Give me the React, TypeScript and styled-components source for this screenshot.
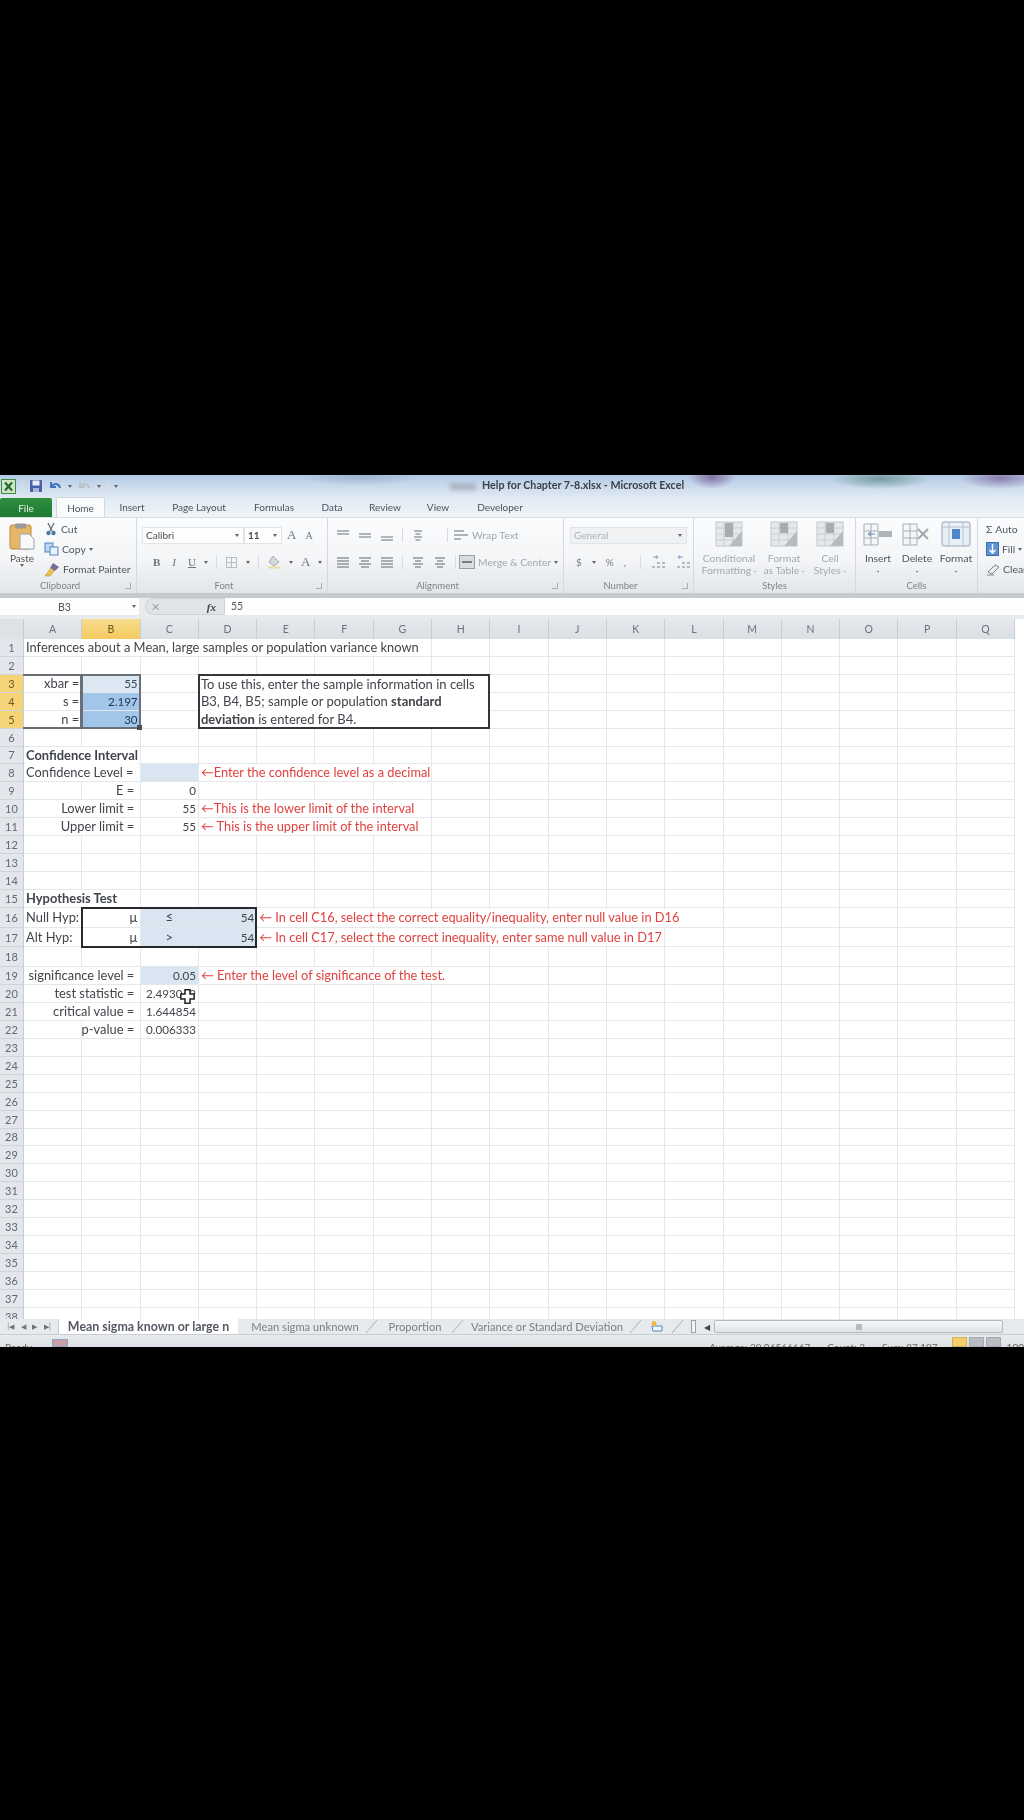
import React from "react";
import styled, { createGlobalStyle } from "styled-components";

const ROW_H = 17.93;
const TALL_ROW_H = 19.8;
const COL_W = 58.3;
const HEAD_W = 24;
const HEAD_H = 20;
const COLS = "ABCDEFGHIJKLMNOPQ".split("");

// rows 16-18 were made a little taller in the sheet
const rowHeight = (r: number) => (r >= 16 && r <= 18 ? TALL_ROW_H : ROW_H);
const rowTop = (r: number) => {
  let top = HEAD_H;
  for (let i = 1; i < r; i++) top += rowHeight(i);
  return top;
};

type Cell = {
  text: React.ReactNode;
  align?: "left" | "right" | "center";
  color?: string;
  bold?: boolean;
  fill?: string;
  num?: boolean;
};

const RED = "#e0413f";
const PALE = "#d9e5f1";
const SEL = "#a2c6ea";

const cells: Record<string, Cell> = {
  A1: { text: "Inferences about a Mean, large samples or population variance known" },
  A3: { text: "xbar =", align: "right" },
  A4: { text: "s =", align: "right" },
  A5: { text: "n =", align: "right" },
  B3: { text: "55", align: "right", fill: "#dbe7f2", color: "#3c4a5a", num: true },
  B4: { text: "2.197", align: "right", fill: SEL, color: "#1d3350", num: true },
  B5: { text: "30", align: "right", fill: SEL, color: "#1d3350", num: true },
  A7: { text: "Confidence Interval", bold: true },
  A8: { text: "Confidence Level =" },
  C8: { text: "", fill: PALE },
  D8: { text: "←Enter the confidence level as a decimal", color: RED },
  B9: { text: "E =\u00a0", align: "right" },
  C9: { text: "0", align: "right", num: true },
  B10: { text: "Lower limit =\u00a0", align: "right" },
  C10: { text: "55", align: "right", num: true },
  D10: { text: "←This is the lower limit of the interval", color: RED },
  B11: { text: "Upper limit =\u00a0", align: "right" },
  C11: { text: "55", align: "right", num: true },
  D11: { text: "← This is the upper limit of the interval", color: RED },
  A15: { text: "Hypothesis Test", bold: true },
  A16: { text: "Null Hyp:" },
  B16: { text: "µ", align: "right" },
  C16: { text: "≤", align: "center", fill: PALE },
  D16: { text: "54", align: "right", fill: PALE, num: true },
  E16: { text: "← In cell C16, select the correct equality/inequality, enter null value in D16", color: RED },
  A17: { text: "Alt Hyp:" },
  B17: { text: "µ", align: "right" },
  C17: { text: ">", align: "center", fill: PALE },
  D17: { text: "54", align: "right", fill: PALE, num: true },
  E17: { text: "← In cell C17, select the correct inequality, enter same null value in D17", color: RED },
  B19: { text: "significance level =\u00a0", align: "right" },
  C19: { text: "0.05", align: "right", fill: PALE, num: true },
  D19: { text: "← Enter the level of significance of the test.", color: RED },
  B20: { text: "test statistic =\u00a0", align: "right" },
  C20: { text: "2.493049", align: "right", num: true },
  B21: { text: "critical value =\u00a0", align: "right" },
  C21: { text: "1.644854", align: "right", num: true },
  B22: { text: "p-value =\u00a0", align: "right" },
  C22: { text: "0.006333", align: "right", num: true },
};

const rows = Array.from({ length: 38 }, (_, i) => i + 1);

const GlobalStyle = createGlobalStyle`
  html, body {
    margin: 0;
    padding: 0;
    background: #000;
  }
`;

const Page = styled.div`
  width: 1024px;
  height: 1820px;
  padding-top: 475px;
  box-sizing: border-box;
  background: #000;
  overflow: hidden;
`;

const ExcelWindow = styled.div`
  height: 872px;
  display: flex;
  flex-direction: column;
  overflow: hidden;
  background: #fff;
  font-family: "Lato", "Open Sans", sans-serif;
  color: #3b3f45;
  filter: blur(0.7px);
`;

const TitleBar = styled.div`
  position: relative;
  height: 22px;
  flex-shrink: 0;
  display: flex;
  align-items: center;
  gap: 6px;
  padding-left: 1px;
  box-sizing: border-box;
  background:
    radial-gradient(ellipse 24px 12px at 712px 2px, rgba(110, 80, 140, 0.75), transparent),
    radial-gradient(ellipse 50px 10px at 880px 4px, rgba(80, 130, 120, 0.65), transparent),
    radial-gradient(ellipse 40px 11px at 1000px 3px, rgba(120, 90, 150, 0.7), transparent),
    radial-gradient(ellipse 60px 9px at 360px 2px, rgba(120, 140, 180, 0.4), transparent),
    linear-gradient(#b4cbe4, #dfe9f4);
`;

const TitleText = styled.div`
  position: absolute;
  left: 482px;
  top: 3px;
  font-size: 10.7px;
  font-weight: 700;
  color: #3c4048;
  white-space: nowrap;
`;

const TitleSmudge = styled.div`
  position: absolute;
  left: 450px;
  top: 8px;
  width: 26px;
  height: 7px;
  background: #a9b4c4;
  filter: blur(2px);
`;

const TabRow = styled.div`
  height: 20px;
  flex-shrink: 0;
  display: flex;
  align-items: stretch;
  background: linear-gradient(#e0e9f3, #f0f4f8);
  font-size: 10px;
  color: #4c5460;
`;

const FileTab = styled.div`
  width: 52px;
  margin-top: 1px;
  display: flex;
  align-items: center;
  justify-content: center;
  color: #e6f3e6;
  background: linear-gradient(#2f8f3e, #1c7a31);
  border-radius: 2px 2px 0 0;
`;

const HomeTab = styled.div`
  width: 49px;
  margin-left: 4px;
  display: flex;
  align-items: center;
  justify-content: center;
  background: #fafbfc;
  border: 1px solid #d2d6db;
  border-bottom: none;
  border-radius: 2px 2px 0 0;
  box-sizing: border-box;
`;

const RibbonTab = styled.div<{ $w: number }>`
  width: ${(p) => p.$w}px;
  display: flex;
  align-items: center;
  justify-content: center;
  white-space: nowrap;
`;

const Ribbon = styled.div`
  height: 76px;
  flex-shrink: 0;
  display: flex;
  background: linear-gradient(#fbfcfd 0%, #f3f5f7 55%, #e3e6e9 100%);
  border-top: 1px solid #d9dde2;
  box-sizing: border-box;
`;

const Group = styled.div<{ $w: number }>`
  width: ${(p) => p.$w}px;
  flex-shrink: 0;
  display: flex;
  flex-direction: column;
  border-right: 1px solid #d5d8dc;
  box-sizing: border-box;
  overflow: hidden;
`;

const GroupBody = styled.div`
  flex: 1;
  display: flex;
  min-height: 0;
`;

const GroupLabel = styled.div<{ $launcher?: boolean }>`
  position: relative;
  height: 14px;
  line-height: 13px;
  text-align: center;
  padding-right: ${(p) => (p.$launcher ? 16 : 0)}px;
  font-size: 9.5px;
  color: #7d838b;

  ${(p) =>
    p.$launcher &&
    `&::after {
      content: "";
      position: absolute;
      right: 5px;
      top: 4px;
      width: 5px;
      height: 5px;
      border-right: 1px solid #a9adb3;
      border-bottom: 1px solid #a9adb3;
    }`}
`;

const PasteCol = styled.div`
  width: 44px;
  display: flex;
  flex-direction: column;
  align-items: center;
  padding-top: 5px;
  font-size: 10px;
  color: #555;
  line-height: 11px;

  svg {
    margin-bottom: 3px;
  }
`;

const SmallCol = styled.div<{ $pad?: number }>`
  display: flex;
  flex-direction: column;
  justify-content: space-between;
  padding: 2px 0 1px ${(p) => p.$pad ?? 0}px;
`;

const SmallItem = styled.div<{ $muted?: boolean; $ml?: number }>`
  display: flex;
  align-items: center;
  gap: 3px;
  height: 18px;
  margin-left: ${(p) => p.$ml ?? 0}px;
  font-size: 10.4px;
  white-space: nowrap;
  color: ${(p) => (p.$muted ? "#a4a8ad" : "#50565e")};
`;

const StackCol = styled.div<{ $pad: number }>`
  flex: 1;
  display: flex;
  flex-direction: column;
  gap: 9px;
  padding: 8px 0 0 ${(p) => p.$pad}px;
`;

const ToolRow = styled.div<{ $gap?: number; $pl?: number }>`
  display: flex;
  align-items: center;
  gap: ${(p) => p.$gap ?? 5}px;
  height: 18px;
  padding-left: ${(p) => p.$pl ?? 0}px;
  font-size: 10px;
  color: #777c83;
`;

const ComboBox = styled.div<{ $w: number; $muted?: boolean }>`
  width: ${(p) => p.$w}px;
  height: 17px;
  flex-shrink: 0;
  display: flex;
  align-items: center;
  justify-content: space-between;
  padding: 0 4px 0 3px;
  box-sizing: border-box;
  background: ${(p) => (p.$muted ? "#eff1f3" : "#fdfdfe")};
  border: 1px solid #e1e4e8;
  font-size: 10px;
  color: ${(p) => (p.$muted ? "#aeb2b6" : "#4b5057")};
`;

const Caret = styled.span`
  width: 0;
  height: 0;
  border-left: 2.5px solid transparent;
  border-right: 2.5px solid transparent;
  border-top: 3px solid #666;
  display: inline-block;
  flex-shrink: 0;
`;

const Sep = styled.span<{ $ml?: number }>`
  width: 1px;
  height: 14px;
  margin-left: ${(p) => p.$ml ?? 0}px;
  background: #d8dbdf;
  flex-shrink: 0;
`;

const FaceLetter = styled.span<{
  $bold?: boolean;
  $italic?: boolean;
  $under?: boolean;
  $size?: number;
  $ml?: number;
}>`
  margin-left: ${(p) => p.$ml ?? 0}px;
  font-family: "Liberation Serif", serif;
  font-size: ${(p) => p.$size ?? 11}px;
  color: #6f747b;
  font-weight: ${(p) => (p.$bold ? 700 : 400)};
  font-style: ${(p) => (p.$italic ? "italic" : "normal")};
  text-decoration: ${(p) => (p.$under ? "underline" : "none")};
`;

const BigButtons = styled.div<{ $gap: number; $pad: number }>`
  display: flex;
  flex: 1;
  gap: ${(p) => p.$gap}px;
  padding: 3px 0 0 ${(p) => p.$pad}px;
`;

const BigButton = styled.div<{ $w: number; $muted?: boolean }>`
  width: ${(p) => p.$w}px;
  display: flex;
  flex-direction: column;
  align-items: center;
  font-size: 10.4px;
  line-height: 12px;
  text-align: center;
  color: ${(p) => (p.$muted ? "#a5a9ae" : "#50565e")};
  white-space: nowrap;

  svg {
    margin-bottom: 5px;
  }
`;

const Divider = styled.div`
  height: 5px;
  flex-shrink: 0;
  background: #c6cacf;
`;

const FormulaRow = styled.div`
  height: 21px;
  flex-shrink: 0;
  display: flex;
  align-items: flex-start;
  background: #e9ecef;
  font-size: 10.5px;
`;

const NameBox = styled.div`
  width: 139px;
  height: 17px;
  display: flex;
  align-items: center;
  background: #fdfdfe;
  color: #555;
  flex-shrink: 0;
`;

const NameText = styled.span`
  margin-left: 58px;
  width: 74px;
`;

const FxButtons = styled.div`
  width: 80px;
  height: 17px;
  margin-left: 6px;
  display: flex;
  align-items: center;
  justify-content: space-between;
  padding: 0 8px 0 5px;
  box-sizing: border-box;
  background: #dfe4e9;
  border-radius: 9px 0 0 9px;
  border: 1px solid #cdd2d8;
  color: #9aa1a9;
  flex-shrink: 0;
`;

const FxMark = styled.span`
  font-family: "Liberation Serif", serif;
  font-style: italic;
  font-weight: 700;
  color: #444;
  font-size: 11px;
`;

const FormulaInput = styled.div`
  flex: 1;
  height: 17px;
  padding-left: 6px;
  line-height: 17px;
  background: #fdfdfe;
  color: #555;
`;

const Sheet = styled.div`
  position: relative;
  flex: 1;
  min-height: 0;
  overflow: hidden;
`;

const HeadRow = styled.div`
  display: flex;
  height: ${HEAD_H}px;
`;

const Row = styled.div<{ $h: number }>`
  display: flex;
  height: ${(p) => p.$h}px;
`;

const Corner = styled.div`
  width: ${HEAD_W}px;
  flex-shrink: 0;
  background: #dde2e7;
  border-right: 1px solid #c8cdd3;
  box-sizing: border-box;
`;

const ColHead = styled.div<{ $active?: boolean }>`
  width: ${COL_W}px;
  flex-shrink: 0;
  display: flex;
  align-items: center;
  justify-content: center;
  font-size: 10.5px;
  color: ${(p) => (p.$active ? "#6e5a20" : "#69727e")};
  background: ${(p) => (p.$active ? "linear-gradient(#f8dd8e, #f4c95f)" : "linear-gradient(#e6e9ed, #dadfe4)")};
  border-right: 1px solid #c8cdd3;
  box-sizing: border-box;
`;

const RowHead = styled.div<{ $active?: boolean }>`
  width: ${HEAD_W}px;
  flex-shrink: 0;
  display: flex;
  align-items: center;
  justify-content: center;
  font-size: 11px;
  color: ${(p) => (p.$active ? "#6e5a20" : "#5f6a76")};
  background: ${(p) => (p.$active ? "#f5d377" : "#e3e7eb")};
  border-right: 1px solid #c8cdd3;
  border-bottom: 1px solid #cfd4d9;
  box-sizing: border-box;
`;

const CellBox = styled.div<{ $align?: string; $fill?: string }>`
  width: ${COL_W}px;
  flex-shrink: 0;
  display: flex;
  align-items: center;
  justify-content: ${(p) =>
    p.$align === "right" ? "flex-end" : p.$align === "center" ? "center" : "flex-start"};
  padding: 0 2px;
  box-sizing: border-box;
  white-space: nowrap;
  background: ${(p) => p.$fill ?? "transparent"};
  border-right: 1px solid #e4e8eb;
  border-bottom: 1px solid #e4e8eb;
`;

// the text hides the gridlines it runs across, as in a real sheet
const CellText = styled.span<{ $color?: string; $bold?: boolean; $fill?: string; $num?: boolean }>`
  position: relative;
  z-index: 1;
  flex-shrink: 0;
  font-size: ${(p) => (p.$num ? 11.6 : p.$color === RED ? 12.8 : 12.9)}px;
  line-height: 17px;
  font-weight: ${(p) => (p.$bold ? 700 : 400)};
  color: ${(p) => p.$color ?? "#41454b"};
  background: ${(p) => p.$fill ?? "#fff"};
`;

// rectangles that lie over the cells, placed by column / row index
const Outline = styled.div<{
  $col: number;
  $row: number;
  $cols: number;
  $rows: number;
  $color: string;
  $open?: boolean;
}>`
  position: absolute;
  z-index: 2;
  left: ${(p) => HEAD_W + p.$col * COL_W - 1}px;
  top: ${(p) => rowTop(p.$row) - 1}px;
  width: ${(p) => p.$cols * COL_W + 1}px;
  height: ${(p) => rowTop(p.$row + p.$rows) - rowTop(p.$row) + 1}px;
  border: 2px solid ${(p) => p.$color};
  ${(p) => (p.$open ? "border-left: none;" : "")}
  box-sizing: border-box;
  pointer-events: none;
`;

const Selection = styled(Outline)`
  &::after {
    content: "";
    position: absolute;
    right: -3px;
    bottom: -3px;
    width: 5px;
    height: 5px;
    background: #4a4f55;
  }
`;

const NoteBox = styled(Outline)`
  padding: 0 0 0 1px;
  background: #fff;
  font-size: 13px;
  line-height: 17.6px;
  color: #41454b;
  white-space: nowrap;
`;

const Cursor = styled.svg`
  position: absolute;
  z-index: 3;
  left: 180px;
  top: 370px;
`;

const SheetTabs = styled.div`
  height: 16px;
  flex-shrink: 0;
  display: flex;
  align-items: stretch;
  background: #e7eaed;
  border-bottom: 1px solid #c9cdd2;
  box-sizing: border-box;
  font-size: 11.2px;
  color: #7a8089;
`;

const NavArrows = styled.div`
  width: 58px;
  flex-shrink: 0;
  display: flex;
  align-items: center;
  justify-content: space-around;
  padding: 0 4px;
  box-sizing: border-box;
  color: #6c727a;
  font-size: 7px;
`;

const ActiveSheet = styled.div`
  width: 180px;
  flex-shrink: 0;
  display: flex;
  align-items: center;
  justify-content: center;
  background: #fff;
  font-weight: 700;
  font-size: 12.4px;
  color: #555a62;
  border-left: 1px solid #c9cdd2;
  box-sizing: border-box;
`;

const SheetTab = styled.div<{ $w: number }>`
  position: relative;
  width: ${(p) => p.$w}px;
  flex-shrink: 0;
  display: flex;
  align-items: center;
  justify-content: center;
  white-space: nowrap;

  &::after {
    content: "";
    position: absolute;
    right: 0;
    top: 1px;
    bottom: 1px;
    width: 1px;
    background: #a9aeb4;
    transform: skewX(-40deg);
  }
`;

const TabSplit = styled.div`
  width: 5px;
  height: 13px;
  margin: 1px 6px 0 auto;
  border: 1px solid #9aa0a7;
  background: #f2f4f6;
  flex-shrink: 0;
  box-sizing: border-box;
`;

const ScrollLeft = styled.div`
  width: 10px;
  flex-shrink: 0;
  display: flex;
  align-items: center;
  justify-content: center;
  font-size: 8px;
  color: #444;
`;

const ScrollTrack = styled.div`
  width: 289px;
  height: 13px;
  margin: 1px 21px 0 2px;
  flex-shrink: 0;
  display: flex;
  align-items: center;
  justify-content: center;
  background: linear-gradient(#f7f8fa, #dfe3e7);
  border: 1px solid #b3b8be;
  border-radius: 2px;
  box-sizing: border-box;
`;

const ScrollGrip = styled.span`
  width: 6px;
  height: 6px;
  background: #b5bac0;
`;

const StatusBar = styled.div`
  height: 12px;
  flex-shrink: 0;
  display: flex;
  align-items: flex-start;
  padding: 6px 0 0 5px;
  box-sizing: border-box;
  background: linear-gradient(#e8ebee, #dde0e4);
  font-size: 10px;
  line-height: 12px;
  color: #666;
  white-space: nowrap;
`;

const StatusIcon = styled.span`
  width: 14px;
  height: 6px;
  margin: -2px 0 0 20px;
  background: #c9a0a8;
  border: 1px solid #8fa0c0;
`;

const StatusValues = styled.div`
  margin-left: auto;
  display: flex;
  gap: 17px;
`;

const ViewButtons = styled.div`
  margin: -4px 6px 0 14px;
  display: flex;
  gap: 2px;
`;

const ViewButton = styled.span<{ $active?: boolean }>`
  width: 15px;
  height: 10px;
  background: ${(p) => (p.$active ? "#f3cf6e" : "#b9bdc3")};
  border: 1px solid ${(p) => (p.$active ? "#d9b04d" : "#a5aab0")};
  box-sizing: border-box;
`;

function ExcelLogo() {
  return (
    <svg width="15" height="15" viewBox="0 0 15 15">
      <rect x="0.5" y="0.5" width="14" height="14" fill="#cfe5c6" stroke="#3e8a48" />
      <path d="M4 3.5 L11 11.5 M11 3.5 L4 11.5" stroke="#1f6d2e" strokeWidth="2.2" />
    </svg>
  );
}

function SaveIcon() {
  return (
    <svg width="14" height="14" viewBox="0 0 14 14">
      <rect x="1" y="1" width="12" height="12" rx="1" fill="#4b5fa8" />
      <rect x="3.5" y="1.5" width="7" height="5" fill="#e8edf6" />
      <rect x="4" y="9" width="6" height="4" fill="#aab6d6" />
    </svg>
  );
}

function UndoIcon({ color }: { color: string }) {
  return (
    <svg width="13" height="12" viewBox="0 0 13 12">
      <path d="M2 2 V7 H7 M2.5 6.5 C5 3 10 3 11 8" fill="none" stroke={color} strokeWidth="2" />
    </svg>
  );
}

function PasteIcon() {
  return (
    <svg width="26" height="27" viewBox="0 0 26 27">
      <rect x="1" y="2" width="21" height="24" rx="2" fill="#e8b765" stroke="#b98a3c" />
      <rect x="6" y="0.5" width="11" height="5" rx="1" fill="#9a9a98" />
      <path d="M11 11 H20 L25 16 V26 H11 Z" fill="#f7f9fb" stroke="#9aa3ad" />
    </svg>
  );
}

function CutIcon() {
  return (
    <svg width="14" height="14" viewBox="0 0 14 14">
      <path d="M4 1 L8 9 M10 1 L6 9" stroke="#6d7784" strokeWidth="1.4" fill="none" />
      <circle cx="4.5" cy="11" r="2.2" fill="#4f77a8" />
      <circle cx="9.5" cy="11" r="2.2" fill="#4f77a8" />
    </svg>
  );
}

function CopyIcon() {
  return (
    <svg width="15" height="14" viewBox="0 0 15 14">
      <rect x="1" y="1" width="8" height="9" fill="#bcd6ef" stroke="#4f86c0" />
      <rect x="6" y="5" width="8" height="8" fill="#e8f1fa" stroke="#4f86c0" />
    </svg>
  );
}

function PainterIcon() {
  return (
    <svg width="16" height="15" viewBox="0 0 16 15">
      <path d="M9 1 L15 5 L11 9 L6 6 Z" fill="#7a6a9c" />
      <path d="M7 6 L10 9 L6 14 L1 14 Z" fill="#efc44d" stroke="#b3892b" strokeWidth="0.6" />
    </svg>
  );
}

function AlignLines({ widths, color = "#b1b5ba" }: { widths: number[]; color?: string }) {
  return (
    <svg width="14" height="13" viewBox="0 0 14 13">
      {widths.map((w, i) => (
        <rect key={i} x={(14 - w) / 2} y={1 + i * 3} width={w} height="2" fill={color} />
      ))}
    </svg>
  );
}

function BorderIcon() {
  return (
    <svg width="13" height="13" viewBox="0 0 13 13">
      <path d="M1.5 1.5 H11.5 V11.5 H1.5 Z M6.5 1.5 V11.5 M1.5 6.5 H11.5" stroke="#b8bcc1" fill="none" />
    </svg>
  );
}

function FillIcon() {
  return (
    <svg width="14" height="14" viewBox="0 0 14 14">
      <path d="M6 1 L12 7 L7 11 L2 7 Z" fill="#d5d7da" stroke="#a5a9ae" />
      <rect x="1" y="11.5" width="12" height="2" fill="#e9dca0" />
    </svg>
  );
}

function WrapIcon() {
  return (
    <svg width="16" height="13" viewBox="0 0 16 13">
      <path d="M1 2 H11 M1 6 H15 M1 10 H8" stroke="#b0b4b9" strokeWidth="2" />
    </svg>
  );
}

function MergeIcon() {
  return (
    <svg width="16" height="14" viewBox="0 0 16 14">
      <rect x="0.5" y="0.5" width="15" height="13" fill="#d9dbde" stroke="#999ea4" />
      <path d="M3 7 H13" stroke="#777c83" strokeWidth="2" />
    </svg>
  );
}

function DecimalIcon({ flip }: { flip?: boolean }) {
  return (
    <svg width="15" height="14" viewBox="0 0 15 14">
      <path d="M1 12 H4 M6 12 H9 M11 12 H14 M6 8 H9 M11 8 H14" stroke="#a3a7ac" strokeWidth="1.6" />
      <path d={flip ? "M2 2 H7 M2 2 L4 0.5 M2 2 L4 3.5" : "M7 2 H2 M7 2 L5 0.5 M7 2 L5 3.5"} stroke="#7b9cc0" fill="none" />
    </svg>
  );
}

function GrayTable({ accent }: { accent?: boolean }) {
  return (
    <svg width="30" height="26" viewBox="0 0 30 26">
      <rect x="2" y="1" width="26" height="24" fill="#e6e8ea" stroke="#c4c7cb" />
      <path d="M2 7 H28 M2 13 H28 M2 19 H28 M10 1 V25 M19 1 V25" stroke="#c9ccd0" />
      <rect x="11" y="2" width="8" height={accent ? 14 : 10} fill="#a8acb1" />
      <path d="M15 25 L28 10 V25 Z" fill="#b7babe" />
    </svg>
  );
}

function InsertIcon() {
  return (
    <svg width="30" height="26" viewBox="0 0 30 26">
      <path d="M1 3 H15 V24 H1 Z M1 10 H15 M1 17 H15 M8 3 V24" fill="#f4f6f8" stroke="#a9afb6" />
      <rect x="16" y="10" width="13" height="6" fill="#aeb3ba" />
      <path d="M5 13 H12 M5 13 L8 11 M5 13 L8 15" stroke="#6a8bb0" />
    </svg>
  );
}

function DeleteIcon() {
  return (
    <svg width="30" height="26" viewBox="0 0 30 26">
      <path d="M1 3 H15 V24 H1 Z M1 10 H15 M1 17 H15 M8 3 V24" fill="#f4f6f8" stroke="#a9afb6" />
      <path d="M16 8 L26 18 M26 8 L16 18" stroke="#a4a8ae" strokeWidth="2" />
    </svg>
  );
}

function FormatIcon() {
  return (
    <svg width="30" height="26" viewBox="0 0 30 26">
      <rect x="1" y="1" width="28" height="24" rx="2" fill="#e9eff6" stroke="#97a4b4" />
      <path d="M1 6 H29 M8 1 V25 M22 1 V25" stroke="#b6c2cf" />
      <rect x="11" y="8" width="8" height="10" fill="#4d86c9" />
    </svg>
  );
}

function FillDown() {
  return (
    <svg width="13" height="14" viewBox="0 0 13 14">
      <rect x="0.5" y="0.5" width="12" height="13" fill="#5e93d1" stroke="#3e6ea8" />
      <path d="M6.5 2 V11 M3.5 8 L6.5 11 L9.5 8" stroke="#fff" fill="none" strokeWidth="1.4" />
    </svg>
  );
}

function Eraser() {
  return (
    <svg width="14" height="13" viewBox="0 0 14 13">
      <path d="M2 9 L9 2 L13 4 L6 11 Z" fill="#e9edf2" stroke="#7c8794" />
      <path d="M1 12 H8" stroke="#7c8794" />
    </svg>
  );
}

function ExcelCursor() {
  return (
    <Cursor width="15" height="15" viewBox="0 0 18 18">
      <path
        d="M6 1 H12 V6 H17 V12 H12 V17 H6 V12 H1 V6 H6 Z"
        fill="#fff"
        stroke="#222"
        strokeWidth="1.8"
      />
    </Cursor>
  );
}

function App() {
  return (
    <Page>
      <GlobalStyle />
      <ExcelWindow>
        <TitleBar>
          <ExcelLogo />
          <Sep />
          <SaveIcon />
          <UndoIcon color="#3f73c0" />
          <Caret />
          <UndoIcon color="#b9c3ce" />
          <Caret />
          <Sep />
          <Caret />
          <TitleSmudge />
          <TitleText>Help for Chapter 7-8.xlsx - Microsoft Excel</TitleText>
        </TitleBar>

        <TabRow>
          <FileTab>File</FileTab>
          <HomeTab>Home</HomeTab>
          <RibbonTab $w={54}>Insert</RibbonTab>
          <RibbonTab $w={80}>Page Layout</RibbonTab>
          <RibbonTab $w={70}>Formulas</RibbonTab>
          <RibbonTab $w={46}>Data</RibbonTab>
          <RibbonTab $w={60}>Review</RibbonTab>
          <RibbonTab $w={46}>View</RibbonTab>
          <RibbonTab $w={78}>Developer</RibbonTab>
        </TabRow>

        <Ribbon>
          <Group $w={137}>
            <GroupBody>
              <PasteCol>
                <PasteIcon />
                Paste
                <Caret />
              </PasteCol>
              <SmallCol>
                <SmallItem><CutIcon /> Cut</SmallItem>
                <SmallItem><CopyIcon /> Copy <Caret /></SmallItem>
                <SmallItem><PainterIcon /> Format Painter</SmallItem>
              </SmallCol>
            </GroupBody>
            <GroupLabel $launcher>Clipboard</GroupLabel>
          </Group>

          <Group $w={191}>
            <GroupBody>
              <StackCol $pad={5}>
                <ToolRow $gap={0}>
                  <ComboBox $w={102}>Calibri <Caret /></ComboBox>
                  <ComboBox $w={38}><b>11</b> <Caret /></ComboBox>
                  <FaceLetter $size={13} $ml={5}>A</FaceLetter>
                  <FaceLetter $size={10} $ml={9}>A</FaceLetter>
                </ToolRow>
                <ToolRow $gap={8} $pl={11}>
                  <FaceLetter $bold>B</FaceLetter>
                  <FaceLetter $italic $ml={4}>I</FaceLetter>
                  <FaceLetter $under $ml={4}>U</FaceLetter>
                  <Caret />
                  <Sep />
                  <BorderIcon />
                  <Caret />
                  <Sep />
                  <FillIcon />
                  <Caret />
                  <FaceLetter $size={13}>A</FaceLetter>
                  <Caret />
                </ToolRow>
              </StackCol>
            </GroupBody>
            <GroupLabel $launcher>Font</GroupLabel>
          </Group>

          <Group $w={236}>
            <GroupBody>
              <StackCol $pad={8}>
                <ToolRow $gap={8}>
                  <AlignLines widths={[12, 12, 0, 0]} />
                  <AlignLines widths={[0, 12, 12, 0]} />
                  <AlignLines widths={[0, 0, 12, 12]} />
                  <Sep />
                  <AlignLines widths={[8, 5, 8, 5]} />
                  <Sep $ml={14} />
                  <SmallItem $muted $ml={-3}><WrapIcon /> Wrap Text</SmallItem>
                </ToolRow>
                <ToolRow $gap={8}>
                  <AlignLines widths={[12, 12, 12, 12]} color="#a9adb2" />
                  <AlignLines widths={[12, 8, 12, 8]} color="#a9adb2" />
                  <AlignLines widths={[12, 12, 12, 12]} color="#a9adb2" />
                  <Sep />
                  <AlignLines widths={[10, 6, 10, 6]} color="#a9adb2" />
                  <AlignLines widths={[10, 6, 10, 6]} color="#a9adb2" />
                  <Sep />
                  <SmallItem $muted $ml={-5}><MergeIcon /> Merge &amp; Center <Caret /></SmallItem>
                </ToolRow>
              </StackCol>
            </GroupBody>
            <GroupLabel $launcher>Alignment</GroupLabel>
          </Group>

          <Group $w={130}>
            <GroupBody>
              <StackCol $pad={6}>
                <ToolRow>
                  <ComboBox $w={117} $muted>General <Caret /></ComboBox>
                </ToolRow>
                <ToolRow $gap={10} $pl={6}>
                  <span>$</span>
                  <Caret />
                  <span>%</span>
                  <span>,</span>
                  <Sep $ml={4} />
                  <DecimalIcon />
                  <DecimalIcon flip />
                </ToolRow>
              </StackCol>
            </GroupBody>
            <GroupLabel $launcher>Number</GroupLabel>
          </Group>

          <Group $w={162}>
            <GroupBody>
              <BigButtons $gap={1} $pad={5}>
                <BigButton $w={60} $muted><GrayTable accent />Conditional<br />Formatting ·</BigButton>
                <BigButton $w={48} $muted><GrayTable />Format<br />as Table ·</BigButton>
                <BigButton $w={42} $muted><GrayTable />Cell<br />Styles ·</BigButton>
              </BigButtons>
            </GroupBody>
            <GroupLabel>Styles</GroupLabel>
          </Group>

          <Group $w={122}>
            <GroupBody>
              <BigButtons $gap={3} $pad={4}>
                <BigButton $w={36}><InsertIcon />Insert<br />·</BigButton>
                <BigButton $w={36}><DeleteIcon />Delete<br />·</BigButton>
                <BigButton $w={36}><FormatIcon />Format<br />·</BigButton>
              </BigButtons>
            </GroupBody>
            <GroupLabel>Cells</GroupLabel>
          </Group>

          <Group $w={47}>
            <GroupBody>
              <SmallCol $pad={8}>
                <SmallItem><span>Σ</span> Auto</SmallItem>
                <SmallItem><FillDown /> Fill <Caret /></SmallItem>
                <SmallItem><Eraser /> Clear</SmallItem>
              </SmallCol>
            </GroupBody>
            <GroupLabel />
          </Group>
        </Ribbon>

        <Divider />

        <FormulaRow>
          <NameBox>
            <NameText>B3</NameText>
            <Caret />
          </NameBox>
          <FxButtons>
            <span>✕</span>
            <FxMark>fx</FxMark>
          </FxButtons>
          <FormulaInput>55</FormulaInput>
        </FormulaRow>

        <Sheet>
          <HeadRow>
            <Corner />
            {COLS.map((c) => (
              <ColHead key={c} $active={c === "B"}>{c}</ColHead>
            ))}
          </HeadRow>
          {rows.map((r) => (
            <Row key={r} $h={rowHeight(r)}>
              <RowHead $active={r >= 3 && r <= 5}>{r}</RowHead>
              {COLS.map((c) => {
                const cell = cells[c + r];
                return (
                  <CellBox key={c} $align={cell?.align} $fill={cell?.fill}>
                    {cell?.text ? (
                      <CellText $color={cell.color} $bold={cell.bold} $fill={cell.fill} $num={cell.num}>
                        {cell.text}
                      </CellText>
                    ) : null}
                  </CellBox>
                );
              })}
            </Row>
          ))}

          <Outline $col={0} $row={3} $cols={1} $rows={3} $color="#6a6f75" $open />
          <Selection $col={1} $row={3} $cols={1} $rows={3} $color="#6a7077" />
          <Outline $col={1} $row={16} $cols={3} $rows={2} $color="#26282b" />
          <NoteBox $col={3} $row={3} $cols={5} $rows={3} $color="#33363a">
            To use this, enter the sample information in cells
            <br />
            B3, B4, B5; sample or population <b>standard</b>
            <br />
            <b>deviation</b> is entered for B4.
          </NoteBox>
          <ExcelCursor />
        </Sheet>

        <SheetTabs>
          <NavArrows>
            <span>|◀</span>
            <span>◀</span>
            <span>▶</span>
            <span>▶|</span>
          </NavArrows>
          <ActiveSheet>Mean sigma known or large n</ActiveSheet>
          <SheetTab $w={134}>Mean sigma unknown</SheetTab>
          <SheetTab $w={86}>Proportion</SheetTab>
          <SheetTab $w={178}>Variance or Standard Deviation</SheetTab>
          <SheetTab $w={42}>
            <svg width="16" height="13" viewBox="0 0 16 13">
              <path d="M3 6 H13 V11 H4 Z" fill="#f4f6f8" stroke="#4f86c0" />
              <circle cx="5" cy="3.5" r="2.5" fill="#efb94a" />
            </svg>
          </SheetTab>
          <TabSplit />
          <ScrollLeft>◀</ScrollLeft>
          <ScrollTrack>
            <ScrollGrip />
          </ScrollTrack>
        </SheetTabs>

        <StatusBar>
          Ready
          <StatusIcon />
          <StatusValues>
            <span>Average: 29.06566667</span>
            <span>Count: 3</span>
            <span>Sum: 87.197</span>
          </StatusValues>
          <ViewButtons>
            <ViewButton $active />
            <ViewButton />
            <ViewButton />
          </ViewButtons>
          100
        </StatusBar>
      </ExcelWindow>
    </Page>
  );
}

export default App;
